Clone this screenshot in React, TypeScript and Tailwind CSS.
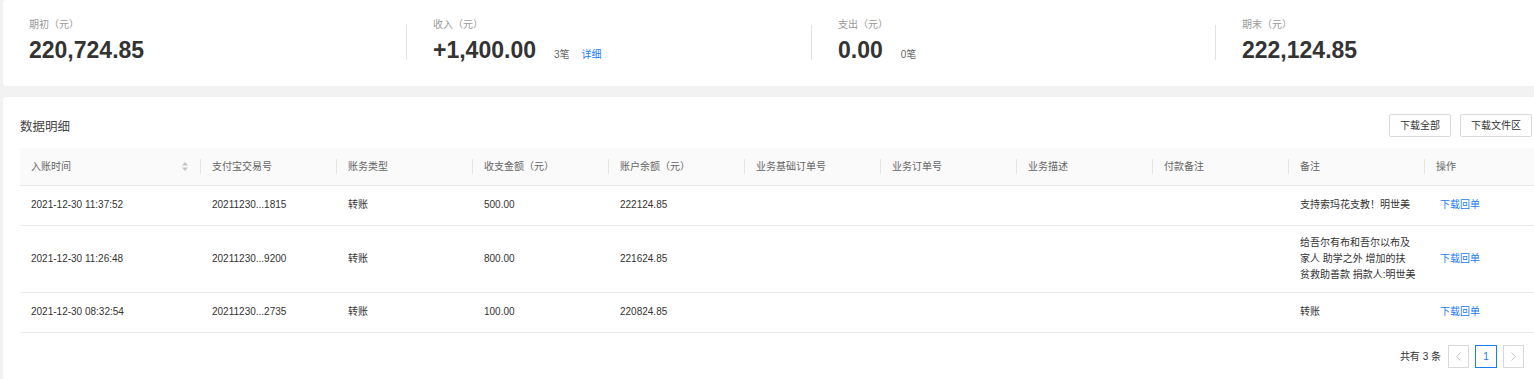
const summary = [
  { label: "期初（元）", value: "220,724.85" },
  { label: "收入（元）", value: "+1,400.00", count: "3笔", link: "详细" },
  { label: "支出（元）", value: "0.00", count: "0笔" },
  { label: "期末（元）", value: "222,124.85" },
];

const columns = [
  "入账时间",
  "支付宝交易号",
  "账务类型",
  "收支金额（元）",
  "账户余额（元）",
  "业务基础订单号",
  "业务订单号",
  "业务描述",
  "付款备注",
  "备注",
  "操作",
];

const rows = [
  {
    time: "2021-12-30 11:37:52",
    tradeNo: "20211230...1815",
    type: "转账",
    amount: "500.00",
    balance: "222124.85",
    remark: ["支持索玛花支教！明世美"],
  },
  {
    time: "2021-12-30 11:26:48",
    tradeNo: "20211230...9200",
    type: "转账",
    amount: "800.00",
    balance: "221624.85",
    remark: ["给吾尔有布和吾尔以布及", "家人 助学之外 增加的扶", "贫救助善款 捐款人:明世美"],
  },
  {
    time: "2021-12-30 08:32:54",
    tradeNo: "20211230...2735",
    type: "转账",
    amount: "100.00",
    balance: "220824.85",
    remark: ["转账"],
  },
];

const SortIcon = () => (
  <svg width="6" height="9" viewBox="0 0 6 9" className="shrink-0">
    <path d="M3 0 L6 3.5 H0 Z" fill="#c4c4c4" />
    <path d="M0 5.5 H6 L3 9 Z" fill="#c4c4c4" />
  </svg>
);

const SummaryCard = () => {
  return (
    <div className="flex h-[86px] w-[1700px] rounded-[4px] bg-white">
      {summary.map((item, i) => (
        <div
          key={item.label}
          className={i === 0 ? "flex w-[403px] shrink-0" : i === 1 ? "flex w-[405px] shrink-0" : "flex w-[404px] shrink-0"}
        >
          {i > 0 && <div className="mt-[25px] h-[35px] w-px bg-[#e2e2e2]" />}
          <div className="pl-[26px] pt-[18px]">
            <div className="text-[10px] leading-[14px] text-[#999]">{item.label}</div>
            <div className="mt-[4px] flex items-baseline">
              <span className="text-[23px] font-bold leading-[28px] text-[#333]">{item.value}</span>
              {item.count && <span className="ml-[18px] text-[10px] text-[#666]">{item.count}</span>}
              {item.link && <span className="ml-[12px] text-[10px] text-[#1a7af8]">{item.link}</span>}
            </div>
          </div>
        </div>
      ))}
    </div>
  );
};

const DetailCard = () => {
  return (
    <div className="mt-[11px] h-[300px] w-[1600px] rounded-[4px] bg-white pl-[17px] pt-[17px]">
      <div className="w-[1514px]">
        <div className="flex h-[23px] items-center justify-between pr-[2px]">
          <span className="pt-[3px] text-[12.5px] text-[#444]">数据明细</span>
          <div className="flex gap-[9px]">
            <button className="h-[23px] rounded-[2px] border border-[#d9d9d9] px-[10px] text-[10px] text-[#333]">下载全部</button>
            <button className="h-[23px] rounded-[2px] border border-[#d9d9d9] px-[10px] text-[10px] text-[#333]">下载文件区</button>
          </div>
        </div>

        <div className="mt-[11px] w-[1514px] overflow-hidden">
          <table className="w-[1554px] table-fixed border-collapse text-left text-[10px]">
            <colgroup>
              <col className="w-[180px]" />
              {columns.slice(1, 10).map((c) => (
                <col key={c} className="w-[136px]" />
              ))}
              <col className="w-[150px]" />
            </colgroup>
            <thead>
              <tr className="h-[37px] border-b border-[#e8e8e8] bg-[#fafafa]">
                {columns.map((c, i) => (
                  <th key={c} className="p-0 font-normal text-[#666]">
                    {i === 0 ? (
                      <div className="flex items-center justify-between pl-[11px] pr-[12px] leading-[15px]">
                        {c}
                        <SortIcon />
                      </div>
                    ) : (
                      <div className="border-l border-[#e5e5e5] pl-[11px] leading-[15px]">{c}</div>
                    )}
                  </th>
                ))}
              </tr>
            </thead>
            <tbody className="text-[#333]">
              {rows.map((r) => (
                <tr key={r.time} className="h-[40px] border-b border-[#ebebeb] leading-[16px]">
                  <td className="py-[9px] pl-[11px]">{r.time}</td>
                  <td className="py-[9px] pl-[12px]">{r.tradeNo}</td>
                  <td className="py-[9px] pl-[12px]">{r.type}</td>
                  <td className="py-[9px] pl-[12px]">{r.amount}</td>
                  <td className="py-[9px] pl-[12px]">{r.balance}</td>
                  <td />
                  <td />
                  <td />
                  <td />
                  <td className="py-[9px] pl-[12px]">
                    {r.remark.map((line) => (
                      <div key={line} className="whitespace-nowrap">{line}</div>
                    ))}
                  </td>
                  <td className="py-[9px] pl-[16px] text-[#1a7af8]">下载回单</td>
                </tr>
              ))}
            </tbody>
          </table>
        </div>

        <div className="flex items-center justify-end gap-[6px] pr-[10px] pt-[12px]">
          <span className="mr-[1px] text-[10px] text-[#333]">共有 3 条</span>
          <div className="flex h-[23px] w-[21px] items-center justify-center border border-[#d9d9d9]">
            <svg width="5" height="9" viewBox="0 0 5 9">
              <path d="M4.5 0.5 L0.8 4.5 L4.5 8.5" fill="none" stroke="#c0c0c0" strokeWidth="1" />
            </svg>
          </div>
          <div className="flex h-[23px] w-[22px] items-center justify-center border border-[#1a7af8] text-[10px] text-[#1a7af8]">1</div>
          <div className="flex h-[23px] w-[21px] items-center justify-center border border-[#d9d9d9]">
            <svg width="5" height="9" viewBox="0 0 5 9">
              <path d="M0.5 0.5 L4.2 4.5 L0.5 8.5" fill="none" stroke="#c0c0c0" strokeWidth="1" />
            </svg>
          </div>
        </div>
      </div>
    </div>
  );
};

export default function App() {
  return (
    <div className="h-[379px] w-[1534px] overflow-hidden bg-[#f2f2f2] pl-[3px] font-['Liberation_Sans','Noto_Sans_CJK_SC',sans-serif]">
      <SummaryCard />
      <DetailCard />
    </div>
  );
}
